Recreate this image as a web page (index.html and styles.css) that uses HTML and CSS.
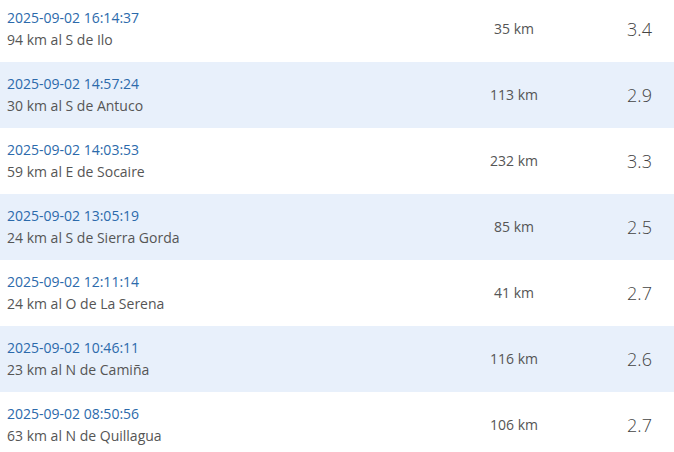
FILE: index.html
```html
<!DOCTYPE html>
<html lang="es">
<head>
<meta charset="utf-8">
<link rel="stylesheet" href="styles.css">
</head>
<body>
<div class="list">
  <div class="row">
    <div class="place"><div class="date">2025-09-02 16:14:37</div><div class="desc">94 km al S de Ilo</div></div>
    <div class="depth">35 km</div>
    <div class="mag">3.4</div>
  </div>
  <div class="row alt">
    <div class="place"><div class="date">2025-09-02 14:57:24</div><div class="desc">30 km al S de Antuco</div></div>
    <div class="depth">113 km</div>
    <div class="mag">2.9</div>
  </div>
  <div class="row">
    <div class="place"><div class="date">2025-09-02 14:03:53</div><div class="desc">59 km al E de Socaire</div></div>
    <div class="depth">232 km</div>
    <div class="mag">3.3</div>
  </div>
  <div class="row alt">
    <div class="place"><div class="date">2025-09-02 13:05:19</div><div class="desc">24 km al S de Sierra Gorda</div></div>
    <div class="depth">85 km</div>
    <div class="mag">2.5</div>
  </div>
  <div class="row">
    <div class="place"><div class="date">2025-09-02 12:11:14</div><div class="desc">24 km al O de La Serena</div></div>
    <div class="depth">41 km</div>
    <div class="mag">2.7</div>
  </div>
  <div class="row alt">
    <div class="place"><div class="date">2025-09-02 10:46:11</div><div class="desc">23 km al N de Camiña</div></div>
    <div class="depth">116 km</div>
    <div class="mag">2.6</div>
  </div>
  <div class="row">
    <div class="place"><div class="date">2025-09-02 08:50:56</div><div class="desc">63 km al N de Quillagua</div></div>
    <div class="depth">106 km</div>
    <div class="mag">2.7</div>
  </div>
</div>
</body>
</html>
```
FILE: styles.css
```css
html, body {
  margin: 0;
  padding: 0;
  background: #ffffff;
  overflow: hidden;
}
body {
  font-family: "Open Sans", "Liberation Sans", sans-serif;
  color: #555555;
}
.list {
  margin-top: -4px;
}
.row {
  display: grid;
  grid-template-columns: 1fr 120px 69px;
  column-gap: 31px;
  align-items: center;
  height: 66px;
  padding: 0 0 0 7px;
  box-sizing: border-box;
}
.row.alt {
  background: #e8f0fb;
}
.place {
  font-size: 14px;
  line-height: 22px;
}
.date {
  color: #2c6aab;
}
.desc {
  color: #555555;
}
.depth {
  text-align: center;
  font-size: 14px;
  line-height: 20px;
  margin-top: -1px;
  color: #555555;
}
.mag {
  text-align: center;
  font-size: 18px;
  line-height: 24px;
  margin-top: -1px;
  font-weight: 300;
  color: #444444;
}
```
